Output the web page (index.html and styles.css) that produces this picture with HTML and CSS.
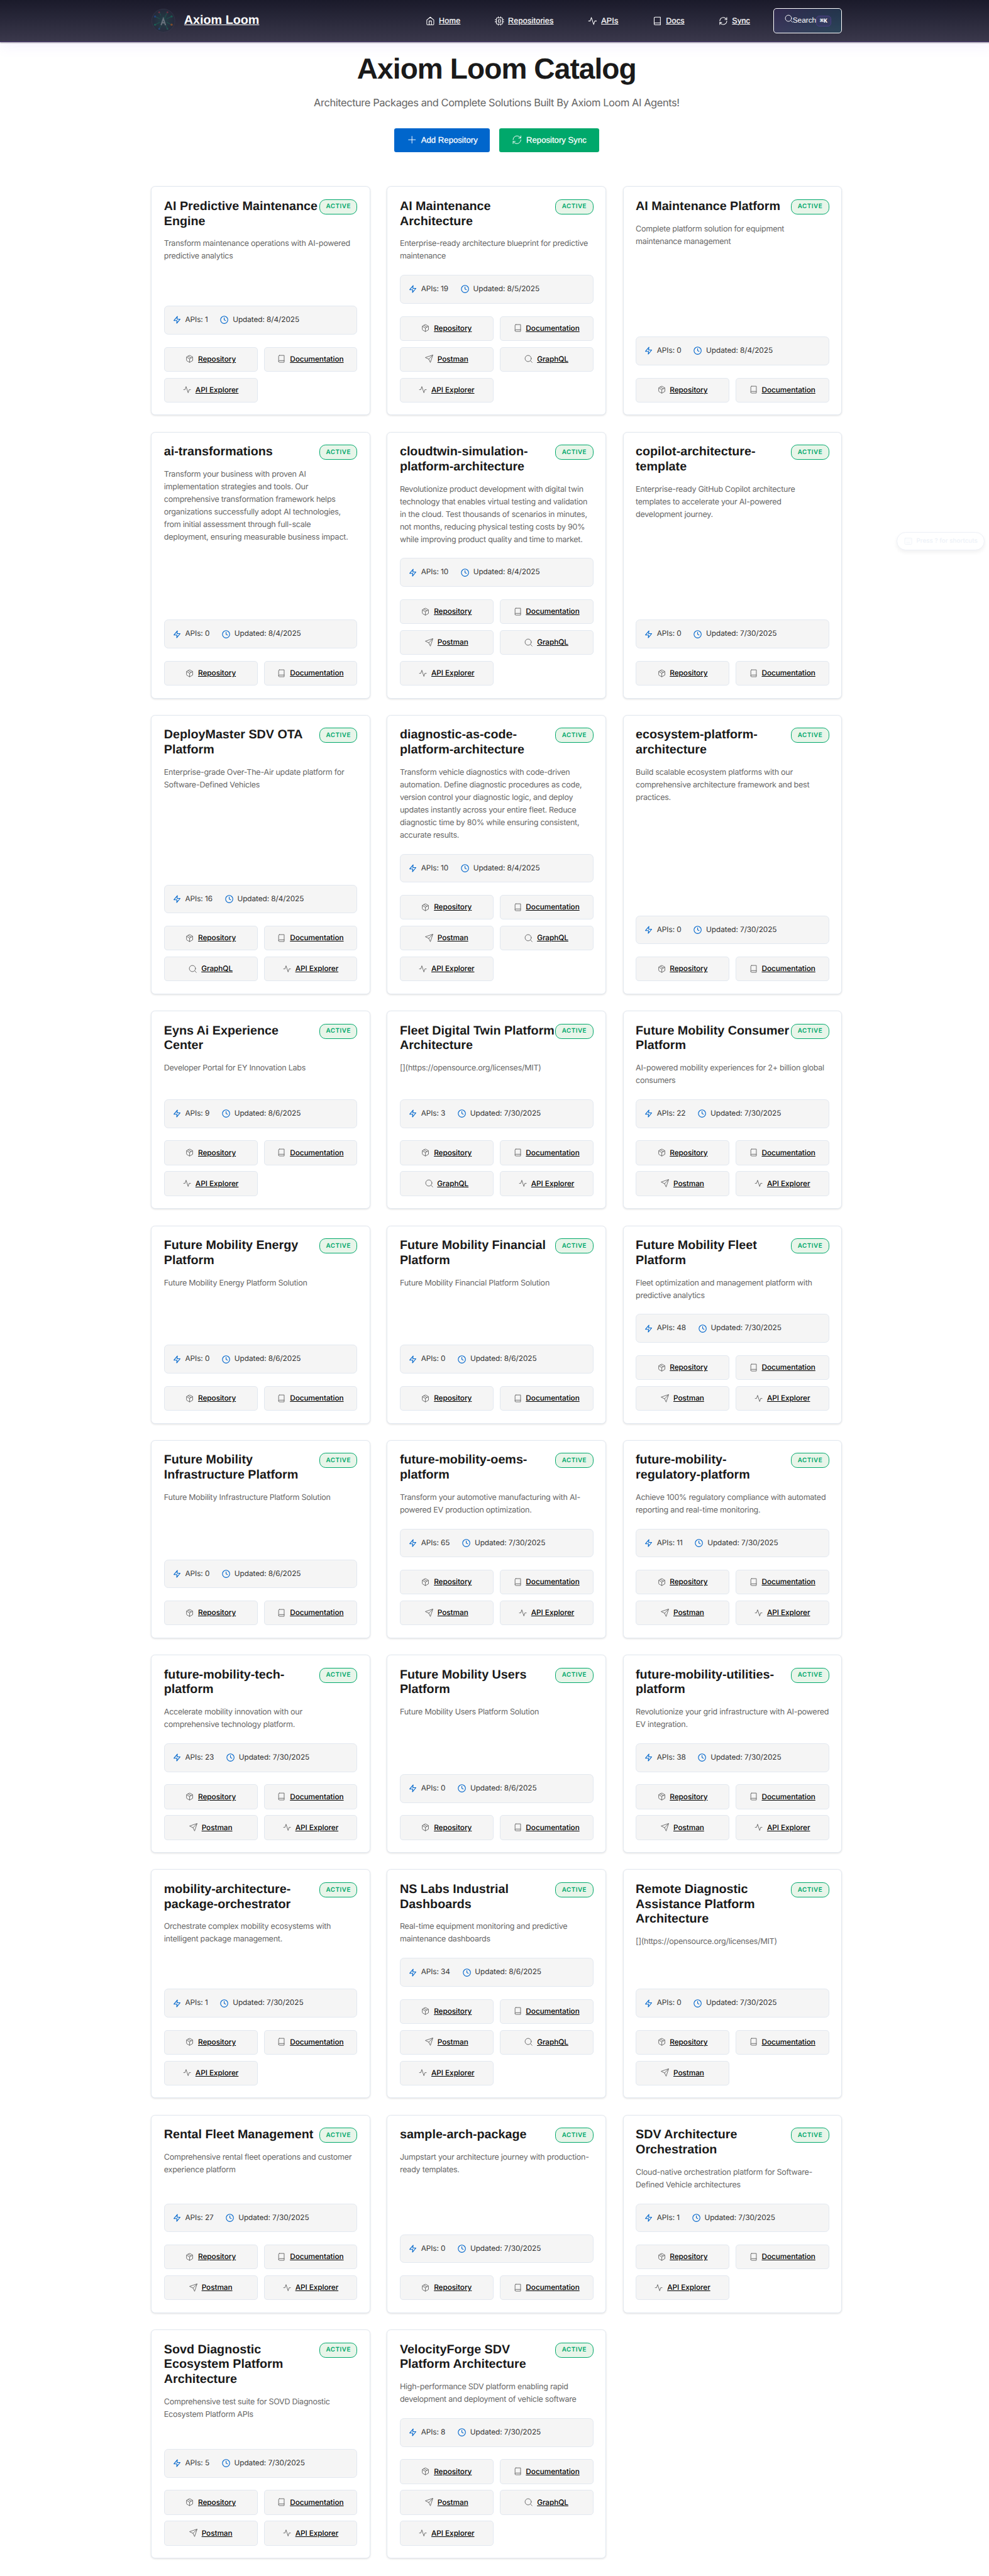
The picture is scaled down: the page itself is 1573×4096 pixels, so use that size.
FILE: index.html
```html
<!DOCTYPE html>
<html lang="en">
<head>
  <meta charset="utf-8">
  <title>Axiom Loom Catalog</title>
  <link rel="stylesheet" href="styles.css">
</head>
<body>
  <svg class="sprite" aria-hidden="true">
    <symbol id="home" viewBox="0 0 24 24"><path d="M3 9.5 12 2l9 7.500V20a2 2 0 0 1-2 2H5a2 2 0 0 1-2-2z"/><path d="M9 22V12h6v10"/></symbol>
    <symbol id="cpu" viewBox="0 0 24 24"><rect x="4" y="4" width="16" height="16" rx="2"/><rect x="9" y="9" width="6" height="6"/><path d="M9 1v3M15 1v3M9 20v3M15 20v3M20 9h3M20 14h3M1 9h3M1 14h3"/></symbol>
    <symbol id="activity" viewBox="0 0 24 24"><path d="M22 12h-4l-3 9L9 3l-3 9H2"/></symbol>
    <symbol id="book" viewBox="0 0 24 24"><path d="M4 19.500A2.500 2.500 0 0 1 6.500 17H20"/><path d="M6.500 2H20v20H6.500A2.500 2.500 0 0 1 4 19.500v-15A2.500 2.500 0 0 1 6.500 2z"/></symbol>
    <symbol id="refresh" viewBox="0 0 24 24"><path d="M3 12a9 9 0 0 1 9-9 9.750 9.750 0 0 1 6.740 2.740L21 8"/><path d="M21 3v5h-5"/><path d="M21 12a9 9 0 0 1-9 9 9.750 9.750 0 0 1-6.740-2.740L3 16"/><path d="M8 16H3v5"/></symbol>
    <symbol id="search" viewBox="0 0 24 24"><circle cx="11" cy="11" r="9"/><path d="m22.500 22.500-5-5"/></symbol>
    <symbol id="plus" viewBox="0 0 24 24"><path d="M12 4v16M4 12h16"/></symbol>
    <symbol id="zap" viewBox="0 0 24 24"><path d="M13 2 3 14h9l-1 8 10-12h-9z"/></symbol>
    <symbol id="clock" viewBox="0 0 24 24"><circle cx="12" cy="12" r="10.500"/><path d="M12 6v6l4 2"/></symbol>
    <symbol id="package" viewBox="0 0 24 24"><path d="m16.500 9.400-9-5.190"/><path d="M21 16V8a2 2 0 0 0-1-1.730l-7-4a2 2 0 0 0-2 0l-7 4A2 2 0 0 0 3 8v8a2 2 0 0 0 1 1.730l7 4a2 2 0 0 0 2 0l7-4A2 2 0 0 0 21 16z"/><path d="M3.270 6.960 12 12.010l8.730-5.050M12 22.080V12"/></symbol>
    <symbol id="send" viewBox="0 0 24 24"><path d="M22.500 1.500 11 13"/><path d="m22.500 1.500-7 21-4.500-9.500-9.500-4.500z"/></symbol>
    <symbol id="keyboard" viewBox="0 0 24 24"><rect x="2" y="3" width="20" height="18" rx="2"/><path d="M6 8h.1M10 8h.1M14 8h.1M18 8h.1M8 12h.1M12 12h.1M16 12h.1M7 16.500h10"/></symbol>
  </svg>

  <header class="topbar">
    <div class="topbar-inner">
      <a class="brand" href="#">
        <svg class="brand-mark" viewBox="0 0 144 144">
          <defs><radialGradient id="glow"><stop offset="0" stop-color="#22474d"/><stop offset="1" stop-color="#262a3c"/></radialGradient></defs>
          <circle cx="72" cy="72" r="67" fill="url(#glow)" stroke="#3c3d50" stroke-width="3"/>
          <path d="M48 24l10 18M96 24 74 66M24 48l28 14M120 48 92 62M24 96l28-14M120 96 92 82M48 120l8-16M96 120 84 94" stroke="#1f5a52" stroke-width="5"/>
          <g fill="#176c5a"><circle cx="120" cy="48" r="6"/><circle cx="24" cy="96" r="6"/><circle cx="96" cy="120" r="5"/></g>
          <g fill="#8b3348"><circle cx="48" cy="24" r="5"/><circle cx="96" cy="24" r="5"/></g>
          <g fill="#214f94"><circle cx="24" cy="48" r="6"/><circle cx="48" cy="120" r="5"/></g>
          <circle cx="120" cy="96" r="6.500" fill="#9a5426"/>
          <path d="M60 96 72 60l12 36M65 85h14" fill="none" stroke="#7f8a93" stroke-width="7" stroke-linecap="round"/>
        </svg>
        <span class="brand-name">Axiom Loom</span>
      </a>
      <nav class="nav">
        <a class="nav-item" href="#"><svg class="icon"><use href="#home"/></svg><span>Home</span></a>
        <a class="nav-item" href="#"><svg class="icon"><use href="#cpu"/></svg><span>Repositories</span></a>
        <a class="nav-item" href="#"><svg class="icon"><use href="#activity"/></svg><span>APIs</span></a>
        <a class="nav-item" href="#"><svg class="icon"><use href="#book"/></svg><span>Docs</span></a>
        <a class="nav-item" href="#"><svg class="icon"><use href="#refresh"/></svg><span>Sync</span></a>
        <button class="search"><svg class="icon"><use href="#search"/></svg><span>Search</span><kbd>⌘K</kbd></button>
      </nav>
    </div>
  </header>

  <main class="page">
    <section class="hero">
      <h1>Axiom Loom Catalog</h1>
      <p>Architecture Packages and Complete Solutions Built By Axiom Loom AI Agents!</p>
      <div class="hero-actions">
        <button class="btn btn-add"><svg class="icon"><use href="#plus"/></svg>Add Repository</button>
        <button class="btn btn-sync"><svg class="icon"><use href="#refresh"/></svg>Repository Sync</button>
      </div>
    </section>
    <section class="grid" id="catalog"></section>
  </main>

  <div class="hint"><svg class="icon"><use href="#keyboard"/></svg><span>Press ? for shortcuts</span></div>

  <script src="catalog.js"></script>
</body>
</html>
```
FILE: catalog.js
```js
const LINKS = {
  R: ['package', 'Repository'],
  D: ['book', 'Documentation'],
  P: ['send', 'Postman'],
  G: ['search', 'GraphQL'],
  E: ['activity', 'API Explorer'],
};

// title, description, API count, last update, available links
const REPOSITORIES = [
  ['AI Predictive Maintenance Engine', 'Transform maintenance operations with AI-powered predictive analytics', 1, '8/4/2025', 'RDE'],
  ['AI Maintenance Architecture', 'Enterprise-ready architecture blueprint for predictive maintenance', 19, '8/5/2025', 'RDPGE'],
  ['AI Maintenance Platform', 'Complete platform solution for equipment maintenance management', 0, '8/4/2025', 'RD'],
  ['ai-transformations', 'Transform your business with proven AI implementation strategies and tools. Our comprehensive transformation framework helps organizations successfully adopt AI technologies, from initial assessment through full-scale<br>deployment, ensuring measurable business impact.', 0, '8/4/2025', 'RD'],
  ['cloudtwin-simulation-platform-architecture', 'Revolutionize product development with digital twin technology that enables virtual testing and validation in the cloud. Test thousands of scenarios in minutes, not months, reducing physical testing costs by 90% while improving product quality and time to market.', 10, '8/4/2025', 'RDPGE'],
  ['copilot-architecture-template', 'Enterprise-ready GitHub Copilot architecture templates to accelerate your AI-powered development journey.', 0, '7/30/2025', 'RD'],
  ['DeployMaster SDV OTA Platform', 'Enterprise-grade Over-The-Air update platform for Software-Defined Vehicles', 16, '8/4/2025', 'RDGE'],
  ['diagnostic-as-code-platform-architecture', 'Transform vehicle diagnostics with code-driven automation. Define diagnostic procedures as code, version control your diagnostic logic, and deploy updates instantly across your entire fleet. Reduce diagnostic time by 80% while ensuring consistent, accurate results.', 10, '8/4/2025', 'RDPGE'],
  ['ecosystem-platform-architecture', 'Build scalable ecosystem platforms with our comprehensive architecture framework and best practices.', 0, '7/30/2025', 'RD'],
  ['Eyns Ai Experience Center', 'Developer Portal for EY Innovation Labs', 9, '8/6/2025', 'RDE'],
  ['Fleet Digital Twin Platform Architecture', '[](https://opensource.org/licenses/MIT)', 3, '7/30/2025', 'RDGE'],
  ['Future Mobility Consumer Platform', 'AI-powered mobility experiences for 2+ billion global consumers', 22, '7/30/2025', 'RDPE'],
  ['Future Mobility Energy Platform', 'Future Mobility Energy Platform Solution', 0, '8/6/2025', 'RD'],
  ['Future Mobility Financial Platform', 'Future Mobility Financial Platform Solution', 0, '8/6/2025', 'RD'],
  ['Future Mobility Fleet Platform', 'Fleet optimization and management platform with predictive analytics', 48, '7/30/2025', 'RDPE'],
  ['Future Mobility Infrastructure Platform', 'Future Mobility Infrastructure Platform Solution', 0, '8/6/2025', 'RD'],
  ['future-mobility-oems-platform', 'Transform your automotive manufacturing with AI-powered EV production optimization.', 65, '7/30/2025', 'RDPE'],
  ['future-mobility-regulatory-platform', 'Achieve 100% regulatory compliance with automated reporting and real-time monitoring.', 11, '7/30/2025', 'RDPE'],
  ['future-mobility-tech-platform', 'Accelerate mobility innovation with our comprehensive technology platform.', 23, '7/30/2025', 'RDPE'],
  ['Future Mobility Users Platform', 'Future Mobility Users Platform Solution', 0, '8/6/2025', 'RD'],
  ['future-mobility-utilities-platform', 'Revolutionize your grid infrastructure with AI-powered EV integration.', 38, '7/30/2025', 'RDPE'],
  ['mobility-architecture-package-orchestrator', 'Orchestrate complex mobility ecosystems with intelligent package management.', 1, '7/30/2025', 'RDE'],
  ['NS Labs Industrial Dashboards', 'Real-time equipment monitoring and predictive maintenance dashboards', 34, '8/6/2025', 'RDPGE'],
  ['Remote Diagnostic Assistance Platform Architecture', '[](https://opensource.org/licenses/MIT)', 0, '7/30/2025', 'RDP'],
  ['Rental Fleet Management', 'Comprehensive rental fleet operations and customer experience platform', 27, '7/30/2025', 'RDPE'],
  ['sample-arch-package', 'Jumpstart your architecture journey with production-ready templates.', 0, '7/30/2025', 'RD'],
  ['SDV Architecture Orchestration', 'Cloud-native orchestration platform for Software-Defined Vehicle architectures', 1, '7/30/2025', 'RDE'],
  ['Sovd Diagnostic Ecosystem Platform Architecture', 'Comprehensive test suite for SOVD Diagnostic Ecosystem Platform APIs', 5, '7/30/2025', 'RDPE'],
  ['VelocityForge SDV Platform Architecture', 'High-performance SDV platform enabling rapid development and deployment of vehicle software', 8, '7/30/2025', 'RDPGE'],
];

const icon = (name) => `<svg class="icon"><use href="#${name}"/></svg>`;

const link = (key) => {
  const [glyph, label] = LINKS[key];
  return `<a class="link" href="#">${icon(glyph)}<span>${label}</span></a>`;
};

const card = ([title, text, apis, updated, links]) => `
  <article class="card">
    <div class="card-head"><h3>${title}</h3><span class="badge">ACTIVE</span></div>
    <p class="card-text">${text}</p>
    <div class="stats">
      <span class="stat">${icon('zap')}APIs: ${apis}</span>
      <span class="stat">${icon('clock')}Updated: ${updated}</span>
    </div>
    <div class="links">${[...links].map(link).join('')}</div>
  </article>`;

document.getElementById('catalog').innerHTML = REPOSITORIES.map(card).join('');
```
FILE: styles.css
```css
:root {
  --ink: #1a1a1a;
  --muted: #666;
  --line: #e2e8f0;
  --blue: #0066cc;
  --green: #00a86b;
  --display: "Liberation Sans", Arial, sans-serif;
  --body: Inter, sans-serif;
  --hairline-fix: calc(.0625rem - 1px);
}

* { box-sizing: border-box; margin: 0; padding: 0; }

html {
  font-size: 13.163px;
  overflow: hidden;
  background: #fff;
  text-rendering: geometricPrecision;
}

body {
  position: relative;
  width: 120rem;
  font-family: var(--body);
  color: var(--ink);
}

button { font: inherit; border: 0; text-rendering: inherit; }

.sprite { position: absolute; width: 0; height: 0; }

.icon {
  flex: none;
  width: 1rem;
  height: 1rem;
  overflow: visible;
  fill: none;
  stroke: currentColor;
  stroke-width: 1.7;
  stroke-linecap: round;
  stroke-linejoin: round;
}

/* Top bar */
.topbar {
  height: 5.0625rem;
  background: linear-gradient(180deg, #1a1a2a 0%, #3a384b 100%);
  border-bottom: 1px solid #4a3573;
  box-shadow: 0 1px 2px rgba(0, 0, 0, .4), 0 .25rem 1.875rem rgba(139, 92, 246, .11);
}

.topbar-inner {
  display: flex;
  align-items: center;
  width: 83.5rem;
  height: 5rem;
  margin: 0 auto;
}

.brand { display: flex; align-items: center; gap: 1rem; color: #fff; }
.brand-mark { width: 3rem; height: 3rem; opacity: .75; }
.brand-name { font: 700 1.5rem/1 var(--display); }

.nav { display: flex; align-items: center; gap: 1.5rem; margin-left: auto; }

.nav-item {
  display: flex;
  align-items: center;
  gap: .5rem;
  padding: .05rem 1.3125rem 0;
  font: 400 .95rem/1.5 var(--display);
  letter-spacing: .01875rem;
  color: #fff;
  -webkit-text-stroke: .25px currentColor;
}

.nav-item .icon { width: 1.125rem; height: 1.125rem; }

.search {
  display: flex;
  align-items: center;
  height: 3rem;
  padding: 0 1.25rem;
  border: 1px solid #fff;
  border-radius: .375rem;
  background: linear-gradient(135deg, rgba(139, 92, 246, .15), rgba(6, 182, 212, .15));
  font: 400 .9rem/1 var(--display);
  color: #fff;
}

.search .icon { margin-bottom: .45rem; }

.search kbd {
  width: 1.8rem;
  padding: .2rem 0;
  border: 1px solid #4c3f86;
  border-radius: .375rem;
  background: #343a60;
  font: 700 .75rem/.75rem "Liberation Mono", "DejaVu Sans Mono", monospace;
  text-align: center;
  margin-top: .15rem;
}

/* Hero */
.page { width: 83.5rem; margin: 0 auto; padding: 1.3rem 0 2rem; }

.hero { display: flex; flex-direction: column; align-items: center; }

.hero h1 {
  font: 700 3.5rem/1.1 var(--display);
  letter-spacing: -.02em;
}

.hero p {
  margin-top: 1.2rem;
  font-size: 1.25rem;
  line-height: 1.6;
  letter-spacing: -.026em;
  color: var(--muted);
}

.hero-actions { display: flex; gap: 1.125rem; margin: 2.07rem 0 4.11rem; }

.btn {
  display: flex;
  align-items: center;
  gap: .5rem;
  height: 2.92rem;
  padding: 0 1.5rem;
  border-radius: .25rem;
  font: 400 1rem/1 var(--display);
  color: #fff;
  -webkit-text-stroke: .25px currentColor;
}

.btn .icon { width: 1.25rem; height: 1.25rem; margin-bottom: .15rem; stroke-width: 1.4; }
.btn-add { background: var(--blue); }
.btn-sync { background: var(--green); }

/* Catalog */
.grid { display: grid; grid-template-columns: repeat(3, 1fr); gap: 2rem; }

.card {
  display: flex;
  flex-direction: column;
  padding: calc(1.5rem + var(--hairline-fix));
  border: 1px solid var(--line);
  border-radius: .5rem;
  background: #fff;
  box-shadow: 0 1px 3px rgba(0, 0, 0, .12);
}

.card-head { display: flex; justify-content: space-between; align-items: flex-start; margin-bottom: 1.07rem; }
.card-head h3 { font: 700 1.5rem/1.2 var(--display); letter-spacing: -.0008em; }

.badge {
  flex: none;
  width: 4.6rem;
  padding: .27rem 0;
  border: 1px solid var(--green);
  border-radius: .75rem;
  background: #e8f5e9;
  font-size: .75rem;
  font-weight: 600;
  line-height: 1.125rem;
  letter-spacing: .05em;
  text-align: center;
  color: var(--green);
}

.card-text {
  flex: 1;
  margin-bottom: 1.43rem;
  font-size: .95rem;
  line-height: 1.6;
  letter-spacing: -.019em;
  color: var(--muted);
}

.stats {
  display: flex;
  gap: 1.5rem;
  margin-bottom: 1.5rem;
  padding: calc(1rem + var(--hairline-fix));
  border: 1px solid var(--line);
  border-radius: .5rem;
  background: #f5f5f5;
  font-size: .9rem;
  line-height: 1.5;
  letter-spacing: -.006em;
  color: #333;
}

.stat { display: flex; align-items: center; gap: .5rem; }
.stat .icon { color: var(--blue); stroke-width: 2; }

.links { display: grid; grid-template-columns: 1fr 1fr; gap: .75rem; }

.link {
  display: flex;
  align-items: center;
  justify-content: center;
  gap: .5rem;
  padding: calc(.79rem + var(--hairline-fix)) 0 calc(.71rem + var(--hairline-fix));
  border: 1px solid var(--line);
  border-radius: .375rem;
  background: #f5f5f5;
  font-size: .9rem;
  font-weight: 500;
  line-height: 1.5;
  letter-spacing: -.006em;
  color: #000;
}

.link .icon { margin-bottom: .12rem; color: var(--muted); }

/* Shortcut hint floating over the page */
.hint {
  position: absolute;
  top: 64.25rem;
  right: 1rem;
  display: flex;
  align-items: center;
  gap: .5rem;
  height: 2.22rem;
  padding: 0 .8rem;
  border: 1px solid #edf0f7;
  border-radius: 1.25rem;
  background: #fff;
  box-shadow: 0 .25rem .5rem rgba(0, 0, 0, .06);
  font-size: .75rem;
  font-weight: 500;
  color: #eef2f8;
}
```
